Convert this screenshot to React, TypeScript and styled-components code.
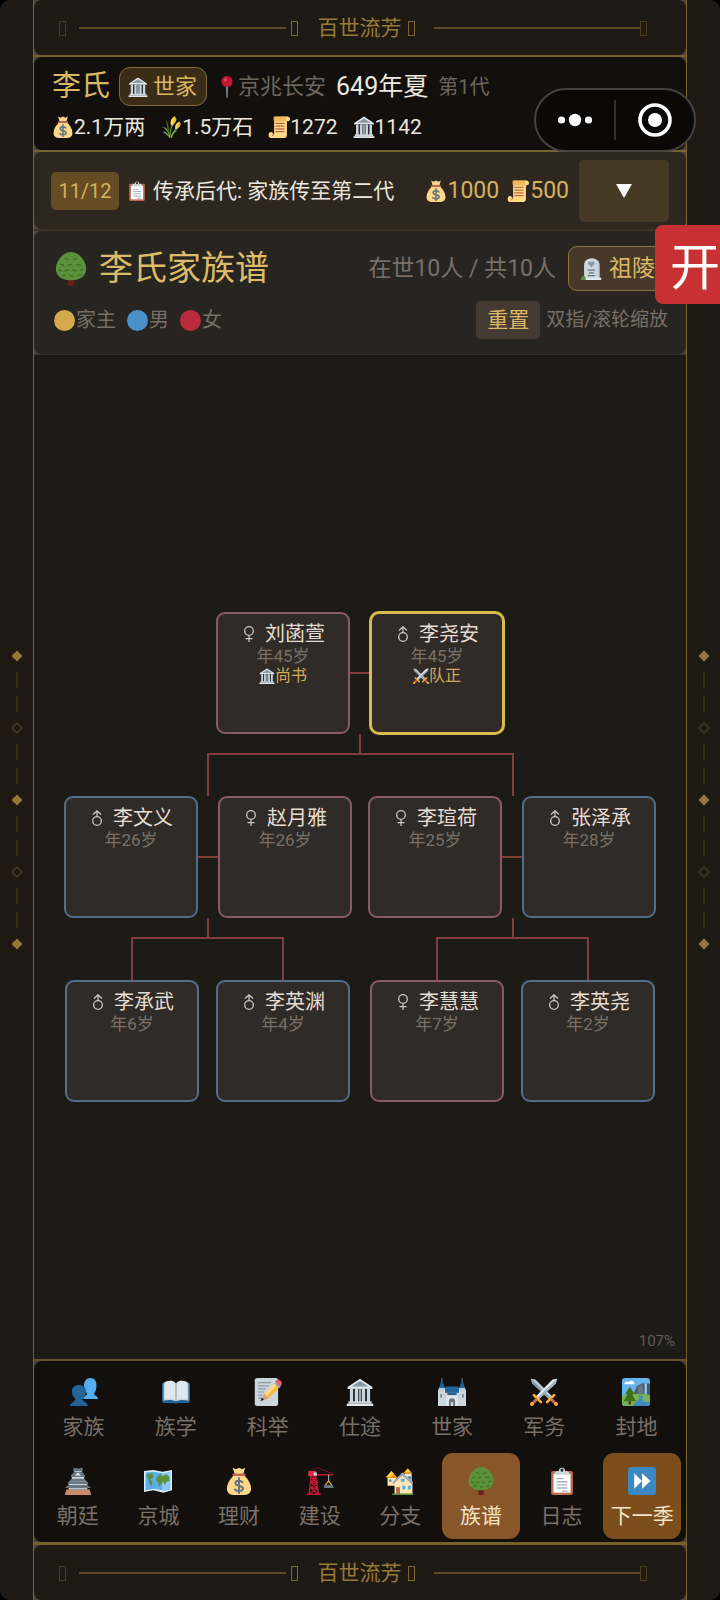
import React from "react";
import styled, { createGlobalStyle } from "styled-components";

const GlobalStyle = createGlobalStyle`
  *, *::before, *::after { box-sizing: border-box; }
  body {
    margin: 0;
    background: #000;
    color: #ece7df;
    font-family: Roboto, "Noto Sans CJK SC", sans-serif;
    font-size: 21px;
    line-height: 30px;
    overflow-x: hidden;
  }
  button { font-family: inherit; line-height: 30px; border: 0; padding: 0; cursor: pointer; }
  h1, p, ul { margin: 0; padding: 0; list-style: none; font-weight: 400; }
`;

/* ---------- icons ---------- */

type IconName =
  | "hall" | "pin" | "bag" | "wheat" | "scroll" | "clipboard" | "tree" | "tomb"
  | "people" | "book" | "memo" | "castle" | "swords" | "park" | "pagoda"
  | "map" | "crane" | "houses" | "forward";

const drawings: Record<IconName, React.ReactNode> = {
  hall: (
    <>
      <path fill="#b8c7d3" d="M3 12L18 2l15 10z" />
      <path fill="#e1e8ed" d="M2 11.500L18 1l16 10.500V14H2z" />
      <path fill="#8899a6" d="M7 11L18 4l11 7z" />
      <path fill="#292f33" d="M5 14h26v17H5z" />
      <path fill="#ccd6dd" d="M5 14h4v17H5zM11.500 14h4v17h-4zM20.500 14h4v17h-4zM27 14h4v17h-4z" />
      <path fill="#9aaab4" d="M16.500 14h3v17h-3z" />
      <path fill="#ccd6dd" d="M3 30h30v3H3z" />
      <path fill="#e1e8ed" d="M1 33h34v3H1z" />
    </>
  ),
  pin: (
    <>
      <path fill="#8899a6" d="M16.500 15h3l-.5 20-1 1-1-1z" />
      <circle cx="18" cy="9" r="9" fill="#be1931" />
      <circle cx="15.500" cy="6" r="2.500" fill="#dd4a5c" />
    </>
  ),
  bag: (
    <>
      <path fill="#fdd888" d="M12 10C7 15 2.500 21 2.500 28c0 5 3.500 8 8 8h15c4.500 0 8-3 8-8 0-7-4.500-13-9.500-18z" />
      <path fill="#fdd888" d="M10 1l4 2 4-2 4 2 4-2-2.500 8h-11z" />
      <path fill="#bf6952" d="M11 8.500h14a1.500 1.500 0 010 3H11a1.500 1.500 0 010-3z" />
      <path fill="none" stroke="#67757f" strokeWidth="2.600" strokeLinecap="round" d="M22.500 19.500c-1.200-1.200-2.700-1.700-4.500-1.700-2.800 0-4.600 1.200-4.600 3.100 0 4.700 9.700 2.200 9.700 6.700 0 2-2.200 3.300-5.100 3.300-2.100 0-4-.7-5.200-2M18 14.500v19" />
    </>
  ),
  wheat: (
    <>
      <path fill="none" stroke="#5c913b" strokeWidth="2.200" strokeLinecap="round" d="M16 35c0-10 2-17 6-23M19 35c1-7 5-12 10-16" />
      <path fill="#77b255" d="M15 35c-1-9-5-14-12-17 7 0 12 5 14 17zM14 34c-3-4-6-7-10-8 5-1 9 2 11 8zM18 35c1-7 4-11 11-11-5 2-8 5-10 11z" />
      <path fill="#3e721d" d="M13 28C12 18 11 11 9 6c5 6 6 13 6 22z" />
      <path fill="#f4d35e" d="M18 15c-2-6 0-11 6-15 2 5 1 11-4 16zM25 21c-1-6 2-10 7-12 1 6-1 10-6 13z" />
      <path fill="#e6b422" d="M22 12c1-3 2-7 2-12l3 5c0 4-2 6-5 9zM28 19c2-3 3-6 4-10l2 4c-1 4-3 6-6 8z" />
    </>
  ),
  scroll: (
    <>
      <path fill="#ffd983" d="M10 1h22c2 0 4 1.500 4 4s-1.500 3.500-3.500 3.500H31V31c0 3-2 5-4 5H5l5-6z" />
      <path fill="#e39f3d" d="M8 5c0-2 1-4 3-4h20c-2 1-2.500 3-1 4.500 1 1 .5 3-1 3H11C9 8.500 8 7 8 5z" opacity=".55" />
      <path fill="#ffd983" d="M1 31c0-3 2-5 4-5s4 2 4 3.500S8 32 7 32h18c0 2 1 4 3 4H5c-2.500 0-4-2-4-5z" />
      <path fill="none" stroke="#c1694f" strokeWidth="2" d="M12 12h15M12 16.500h15M12 21h15M12 25.500h15" />
      <path fill="none" stroke="#c1694f" strokeWidth="1.500" d="M7 32c2 0 2.500-3 .5-4" />
    </>
  ),
  clipboard: (
    <>
      <rect x="4" y="5" width="28" height="31" rx="2.500" fill="#c1694f" />
      <path fill="#fff" d="M7 9h22v24H7z" />
      <path fill="none" stroke="#a3b3c0" strokeWidth="1.800" d="M11 15h9M11 19h14M11 23h14M11 27h14M18 31h7" />
      <path fill="#ccd6dd" d="M8 10c0-4 3-5 6-5a4 4 0 018 0c3 0 6 1 6 5z" />
      <circle cx="18" cy="4" r="2" fill="#292f33" />
    </>
  ),
  tree: (
    <>
      <path fill="#662113" d="M14.500 28h7v6.500c0 2-7 2-7 0z" />
      <path fill="#5c913b" d="M18 0c8 0 16 9 16 18 0 7-6 12-16 12S2 25 2 18C2 9 10 0 18 0z" />
      <path fill="none" stroke="#3e721d" strokeWidth="1.600" strokeLinecap="round" d="M12 7l3 1M21 8l3-1M7 13l3 1M15 14l3-1M24 13l4 1M5 19l3 1M12 20l3-1M20 19l3 1M28 19l3-1M9 25l3-1M17 25l3 1M25 25l3-1" />
    </>
  ),
  tomb: (
    <>
      <path fill="#9aaab4" d="M8 34V13C8 5 13 1 19 1s12 4 12 12v21z" />
      <path fill="#ccd6dd" d="M5 34V13C5 5 10 1 17 1s12 4 12 12v21z" />
      <path fill="#8899a6" d="M17 15l-5-5c-2-3 2-6 5-3 3-3 7 0 5 3z" />
      <path fill="none" stroke="#66757f" strokeWidth="2" d="M11 20h12M13 24.500h8M11 29h12" />
      <path fill="#e1e8ed" d="M3 32h30v4H3z" />
      <path fill="#5c913b" d="M0 36c0-5 2-7 4-7s4 3 4 7z" />
    </>
  ),
  people: (
    <>
      <path fill="#55acee" d="M17 27c0-4 5-4 5-7-3-3-4-6-4-10 0-6 3-10 8.500-10S34 4 34 10c0 4-1 7-3 10 0 3 5 3 5 7z" />
      <path fill="#226699" d="M0 36c0-5 7-5 7-9-3-3-4.500-6-4.500-10 0-5 4-8 9-8s9 3 9 8c0 4-1.500 7-4.500 10 0 4 7 4 7 9z" />
    </>
  ),
  book: (
    <>
      <path fill="#226699" d="M0 7h36v23c0 1-1 2-2 2H21l-3 1-3-1H2c-1 0-2-1-2-2z" />
      <path fill="#ccd6dd" d="M2 6c6-2 12-2 16 1v23c-5-2-10-2-16-1zM34 6c-6-2-12-2-16 1v23c5-2 10-2 16-1z" />
      <path fill="#e1e8ed" d="M4 5c5-2 10-2 13 1v22c-4-2-8-2-13-1zM32 5c-5-2-10-2-13 1v22c4-2 8-2 13-1z" />
      <path fill="#99aab5" d="M17.300 7h1.400v23h-1.400z" />
    </>
  ),
  memo: (
    <>
      <rect x="1" y="0" width="30" height="36" rx="3" fill="#ccd6dd" />
      <path fill="none" stroke="#8899a6" strokeWidth="1.600" d="M5 6h17M5 10h14M5 14h10M5 18h8M5 22h6M5 26h5" />
      <path fill="#f4ba41" d="M13 20L28 5l6 6-15 15-8 3z" />
      <path fill="#ffd983" d="M13 20L28 5l3 3-15 15z" />
      <path fill="#99aab5" d="M26 7l3-3 6 6-3 3z" />
      <path fill="#ea596e" d="M28.500 3.500c2-4 9 1 7 5l-2 2-6-6z" />
      <path fill="#d99e82" d="M13 20l5 6-9 4z" />
      <path fill="#292f33" d="M10 25l3 3-5 2z" />
    </>
  ),
  castle: (
    <>
      <path fill="#226699" d="M5 3l4 10H1zM31 3l4 10h-8zM8 15l2-4h16l2 4v4H8z" />
      <path fill="#8899a6" d="M4.500 0h1v5h-1zM30.500 0h1v5h-1z" />
      <path fill="#b8c7d3" d="M1 13h8v23H1zM27 13h8v23h-8z" />
      <path fill="#ccd6dd" d="M0 15h3v2h3v-2h3v4h18v-4h3v2h3v-2h3v21H0z" />
      <path fill="#e1e8ed" d="M11 20h14v16H11z" />
      <path fill="#226699" d="M12 19h12v3H12z" />
      <path fill="#66757f" d="M14 36v-6a4 4 0 018 0v6zM3 21h2v4H3zM31 21h2v4h-2z" />
      <path fill="#ccd6dd" d="M16.500 36v-5h3v5z" />
    </>
  ),
  swords: (
    <>
      <path fill="#bdcbd6" d="M1 1l6 1 22 22-4 4L3 7z" />
      <path fill="#8899a6" d="M1 1l26 25-2 2L3 7z" />
      <path fill="#e1e8ed" d="M35 1l-6 1L7 24l4 4L33 7z" />
      <path fill="#9dafbb" d="M35 1L9 26l2 2L33 7z" />
      <path fill="none" stroke="#ffac33" strokeWidth="3.400" strokeLinecap="round" d="M5 22l9 9M31 22l-9 9" />
      <path fill="none" stroke="#bf6952" strokeWidth="4" d="M9 27l-6 6M27 27l6 6" />
      <circle cx="2.500" cy="33.500" r="2.500" fill="#ffac33" />
      <circle cx="33.500" cy="33.500" r="2.500" fill="#ffac33" />
    </>
  ),
  park: (
    <>
      <rect width="36" height="36" rx="4" fill="#66b5ee" />
      <path fill="#fff" d="M3 8a4 4 0 016-3 4 4 0 017 3H3z" />
      <path fill="#4b5760" d="M15 20l4-9 6-4h11v17H15z" />
      <path fill="#66757f" d="M20 12l6-5 2 13h-8z" />
      <path fill="#88c9f9" d="M29 7h3v15h-3z" />
      <path fill="#77b255" d="M0 23c8-3 25-4 36-1v10c0 2-2 4-4 4H4c-2 0-4-2-4-4z" />
      <path fill="#4289c1" d="M21 22c11 2 2 5 7 8 3 2 8 1 8 1v2c-1 2-2 3-4 3H14c1-5 11-6 7-14z" />
      <path fill="#3e721d" d="M10 11l6 10h-3l5 9H2l5-9H4z" />
      <path fill="#662113" d="M8.500 30h3v4h-3z" />
    </>
  ),
  pagoda: (
    <>
      <path fill="#c98a6e" d="M3 29h30l2 7H1z" />
      <path fill="#ccd6dd" d="M13 3h10v5H13zM10 12h16v5H10zM6 21h24v8H6z" />
      <path fill="#66757f" d="M12 1l6 1 6-1v4H12zM9 11l4-5h10l4 5v2H9zM5 20l5-5h16l5 5v2H5zM2 26l4-3h24l4 3v1H2z" />
      <path fill="#e1e8ed" d="M14 11l4-4 4 4z" />
      <path fill="#8899a6" d="M8 28h20v1H8zM8 18h20v1H8z" />
    </>
  ),
  map: (
    <>
      <path fill="#d8ecfa" d="M0 5l12-1 12 2 12-2v26l-11 3-13-3-12 2z" />
      <path fill="#5dadec" d="M2 7l10-1v22L2 30zM12 6l12 2v22l-12-2z" />
      <path fill="#88c9f9" d="M24 8l10-2v23l-10 2z" />
      <path fill="#5c913b" d="M4 9l7-1 1 5-4 3 3 4-1 5-3-4-2-7-2-2zM17 12l5-3 2 3 4-3 4 3 1 6-4 1-2 4-3-5-2 5-3 2-1-6-3-2z" />
    </>
  ),
  crane: (
    <>
      <path fill="none" stroke="#be1931" strokeWidth="1.800" d="M7 8L4 35M12 8l4 27M7 14h6M6 20h8M5 27h10M7 14l7 6-8 7 10 8M12 14l-6 6 9 7-11 8M3 10h32" />
      <path fill="none" stroke="#7d1524" strokeWidth="1.200" d="M8 4l7-3 20 8" />
      <path fill="#dd2e44" d="M3 5h10v7H3z" />
      <path fill="#ccd6dd" d="M10 7h4v4h-4z" />
      <path fill="#be1931" d="M1 34h18v2H1z" />
      <path fill="#99aab5" d="M28.300 10h1.500v8h-1.500z" />
      <path fill="none" stroke="#ffac33" strokeWidth="1.500" d="M25 23l4-5 4 5" />
      <path fill="#66757f" d="M23 23h12v4H23z" />
    </>
  ),
  houses: (
    <>
      <path fill="#ffe8b6" d="M2 14h11v10H2zM24 8h9v10h-9z" />
      <path fill="#f4900c" d="M0 14l7-9 8 9zM22 8l6-6 6 6z" />
      <path fill="#ffcc4d" d="M0 13l7-8 3 4-4 4zM24 7l4-5 3 4z" />
      <path fill="#3b88c3" d="M4 16h3v3H4zM28 12h4v4h-4z" />
      <path fill="#ffe8b6" d="M11 19l11-11 12 11v16H11z" />
      <path fill="#99aab5" d="M8 20L21 7l14 13-2 2L21 11 10 22z" />
      <path fill="#c1694f" d="M13 26h5v9h-5z" />
      <path fill="#5dadec" d="M21 24h4v5h-4zM28 24h4v5h-4zM19 15h5v4h-5z" />
      <path fill="#5c913b" d="M8 34h27v2H8z" />
    </>
  ),
  forward: (
    <>
      <rect width="36" height="36" rx="4" fill="#3b88c3" />
      <path fill="#fff" d="M8 8l10 10L8 28zM18 8l11 10-11 10z" />
    </>
  ),
};

const Glyph = styled.svg<{ $size: number }>`
  display: block;
  flex: none;
  width: ${(p) => p.$size}px;
  height: ${(p) => p.$size}px;
`;

function Icon({ name, size }: { name: IconName; size: number }) {
  return (
    <Glyph $size={size} viewBox="0 0 36 36" aria-hidden="true">
      {drawings[name]}
    </Glyph>
  );
}

/* ---------- frame ---------- */

const Shell = styled.div`
  display: flex;
  min-height: 100vh;
`;

const Rail = styled.aside<{ $side: "left" | "right" }>`
  flex: none;
  width: 34px;
  display: flex;
  flex-direction: column;
  align-items: center;
  justify-content: center;
  background: ${(p) => (p.$side === "left" ? "#201812" : "#1f1913")};
  border: 0 solid #7a6431;
  border-left-width: ${(p) => (p.$side === "right" ? 1 : 0)}px;
  border-right-width: ${(p) => (p.$side === "left" ? 1 : 0)}px;
  border-radius: ${(p) => (p.$side === "left" ? "10px 0 0 10px" : "0 10px 10px 0")};
`;

const Mark = styled.svg`
  display: block;
  width: 16px;
  height: 24px;
`;

const Center = styled.div`
  flex: 1;
  min-width: 0;
  display: flex;
  flex-direction: column;
  background: #1d1b16;
`;

const Band = styled.div<{ $line?: string; $width?: number }>`
  background: #4a443b;
  border-bottom: ${(p) => p.$width ?? 0}px solid ${(p) => p.$line ?? "transparent"};
`;

const OrnamentPanel = styled.div`
  height: 55px;
  display: flex;
  align-items: center;
  padding: 0 39px 0 25px;
  border-radius: 8px;
  background: #1f1913;
  color: #967b36;
`;

const Tofu = styled.span<{ $dim?: boolean }>`
  flex: none;
  width: 7px;
  height: 15px;
  margin-top: 2px;
  border: 1px solid ${(p) => (p.$dim ? "#4b3c1f" : "#7d672e")};
`;

const Rule = styled.span<{ $before: number; $after: number }>`
  flex: 1;
  height: 2px;
  margin: 0 ${(p) => p.$after}px 0 ${(p) => p.$before}px;
  background: #5b4922;
`;

const Motto = styled.span`
  margin: 0 6px 0 20px;
`;

function Ornament() {
  return (
    <OrnamentPanel>
      <Tofu $dim />
      <Rule $before={13} $after={5} />
      <Tofu />
      <Motto>百世流芳</Motto>
      <Tofu />
      <Rule $before={19} $after={0} />
      <Tofu $dim />
    </OrnamentPanel>
  );
}

const railMarks = ["full", "bar", "bar", "open", "bar", "bar", "full", "bar", "bar", "open", "bar", "bar", "full"];

function SideRail({ side }: { side: "left" | "right" }) {
  return (
    <Rail $side={side} aria-hidden="true">
      {railMarks.map((m, i) => (
        <Mark key={i} viewBox="0 0 16 24">
          {m === "full" && <path d="M8 6.500l5.500 5.500L8 17.500 2.500 12z" fill="#93783a" />}
          {m === "open" && <path d="M8 7l5 5-5 5-5-5z" fill="none" stroke="#4a3a22" strokeWidth="1.400" />}
          {m === "bar" && <path d="M8 4v16" stroke="#42341e" strokeWidth="1.400" />}
        </Mark>
      ))}
    </Rail>
  );
}

/* ---------- status ---------- */

const StatusPanel = styled.header`
  display: flex;
  flex-direction: column;
  gap: 4px;
  padding: 10px 18px 6px;
  border-radius: 8px;
  background: #130f0d;
`;

const IdentityRow = styled.div`
  display: flex;
  align-items: center;
  height: 39px;
  white-space: nowrap;
`;

const Clan = styled.span`
  font-size: 29px;
  line-height: 39px;
  color: #d9b765;
`;

const Rank = styled.span`
  display: flex;
  align-items: center;
  gap: 5px;
  height: 39px;
  margin: 0 9px;
  padding: 0 9px 0 8px;
  border: 1px solid #816939;
  border-radius: 11px;
  background: #3b2c17;
  color: #d9b765;
  font-size: 22px;
`;

const Place = styled.span`
  display: flex;
  align-items: center;
  font-size: 22px;
  color: #6e655d;
`;

const Season = styled.span`
  margin: 0 10px;
  font-size: 25px;
`;

const Generation = styled.span`
  font-size: 20px;
  color: #6e655d;
`;

const Resources = styled.ul`
  display: flex;
  gap: 15px;
  line-height: 34px;
`;

const Resource = styled.li`
  display: flex;
  align-items: center;
`;

/* ---------- task ---------- */

const TaskPanel = styled.section`
  display: flex;
  align-items: center;
  padding: 8px 17px 7px;
  border-radius: 8px;
  background: #2e271f;
  white-space: nowrap;
`;

const Progress = styled.span`
  width: 68px;
  margin-right: 8px;
  border-radius: 5px;
  background: #664c22;
  color: #d6b15f;
  font-size: 20px;
  line-height: 38px;
  text-align: center;
`;

const TaskText = styled.p`
  flex: 1;
  margin-left: 6px;
`;

const Rewards = styled.div`
  display: flex;
  gap: 8px;
  margin-right: 10px;
  color: #d6b15f;
  font-size: 23px;
  line-height: 34px;
`;

const Reward = styled.span`
  display: flex;
  align-items: center;
  gap: 1px;
`;

const Expand = styled.button`
  display: flex;
  align-items: center;
  justify-content: center;
  width: 90px;
  height: 62px;
  border-radius: 5px;
  background: #463926;
`;

/* ---------- title ---------- */

const TitlePanel = styled.section`
  display: flex;
  flex-direction: column;
  gap: 10px;
  padding: 15px 18px 15px 20px;
  border-radius: 8px;
  background: #282420;
`;

const TitleRow = styled.div`
  display: flex;
  align-items: center;
  height: 45px;
  white-space: nowrap;
`;

const Title = styled.h1`
  display: flex;
  align-items: center;
  gap: 11px;
  flex: 1;
  font-size: 34px;
  line-height: 45px;
  color: #dcbc69;
`;

const Count = styled.span`
  margin-right: 12px;
  font-size: 23px;
  color: #786f67;
`;

const TombButton = styled.button`
  display: flex;
  align-items: center;
  gap: 6px;
  height: 45px;
  padding: 0 12px;
  border: 1px solid #8e733a;
  border-radius: 9px;
  background: #47382a;
  color: #d9b765;
  font-size: 23px;
`;

const LegendRow = styled.div`
  display: flex;
  align-items: center;
  height: 38px;
  white-space: nowrap;
`;

const Legend = styled.ul`
  display: flex;
  flex: 1;
  gap: 11px;
  font-size: 20px;
  color: #786f67;
`;

const LegendItem = styled.li<{ $color: string }>`
  display: flex;
  align-items: center;
  gap: 1px;
  &::before {
    content: "";
    width: 21px;
    height: 21px;
    border-radius: 50%;
    background: ${(p) => p.$color};
  }
`;

const ResetButton = styled.button`
  height: 38px;
  padding: 0 11px;
  border-radius: 5px;
  background: #453a32;
  color: #d9b765;
  font-size: 21px;
`;

const Hint = styled.span`
  margin-left: 6px;
  font-size: 19px;
  color: #786f67;
`;

/* ---------- family tree ---------- */

const Canvas = styled.main`
  position: relative;
  flex: 1;
  display: flex;
  align-items: center;
  justify-content: center;
  min-height: 560px;
`;

const Tree = styled.div`
  position: relative;
  width: 592px;
  height: 490px;
`;

const Links = styled.svg`
  display: block;
  width: 592px;
  height: 490px;
`;

const borderOf = { m: "#536e8c", f: "#8a5b67", head: "#dabb4b" };

const Card = styled.article<{ $x: number; $y: number; $kind: "m" | "f" | "head" }>`
  position: absolute;
  left: ${(p) => p.$x}px;
  top: ${(p) => p.$y}px;
  width: 134px;
  height: 122px;
  padding-top: 8px;
  border-radius: 9px;
  background: #302b26;
  border: 2px solid ${(p) => borderOf[p.$kind]};
  box-shadow: 0 0 0 ${(p) => (p.$kind === "head" ? 1 : 0)}px ${(p) => borderOf[p.$kind]};
  text-align: center;
`;

const Name = styled.div`
  display: flex;
  align-items: center;
  justify-content: center;
  gap: 8px;
  font-size: 20px;
  line-height: 24px;
  color: #e6ddd2;
`;

const Age = styled.div`
  font-size: 17px;
  line-height: 20px;
  color: #7b7065;
`;

const Post = styled.div`
  display: flex;
  align-items: center;
  justify-content: center;
  font-size: 16px;
  line-height: 20px;
  color: #d0aa5f;
`;

const Zoom = styled.span`
  position: absolute;
  right: 11px;
  bottom: 7px;
  font-size: 15px;
  line-height: 22px;
  color: #615b53;
`;

function Sex({ sex }: { sex: "m" | "f" }) {
  return (
    <Glyph $size={16} viewBox="0 0 16 16" role="img" aria-label={sex === "m" ? "男" : "女"}>
      <g fill="none" stroke="#cfc6bb" strokeWidth="1.300">
        {sex === "m" ? (
          <>
            <circle cx="8" cy="11" r="4.300" />
            <path d="M8 6.700V1M4 4.500L8 .8l4 3.700" />
          </>
        ) : (
          <>
            <circle cx="8" cy="5" r="4.300" />
            <path d="M8 9.300V16M4.500 12.600h7" />
          </>
        )}
      </g>
    </Glyph>
  );
}

type Person = {
  name: string; age: number; sex: "m" | "f"; x: number; y: number;
  head?: boolean; post?: string; icon?: IconName;
};

const people: Person[] = [
  { name: "刘菡萱", age: 45, sex: "f", x: 152, y: 0, post: "尚书", icon: "hall" },
  { name: "李尧安", age: 45, sex: "m", x: 306, y: 0, head: true, post: "队正", icon: "swords" },
  { name: "李文义", age: 26, sex: "m", x: 0, y: 184 },
  { name: "赵月雅", age: 26, sex: "f", x: 154, y: 184 },
  { name: "李瑄荷", age: 25, sex: "f", x: 304, y: 184 },
  { name: "张泽承", age: 28, sex: "m", x: 458, y: 184 },
  { name: "李承武", age: 6, sex: "m", x: 1, y: 368 },
  { name: "李英渊", age: 4, sex: "m", x: 152, y: 368 },
  { name: "李慧慧", age: 7, sex: "f", x: 306, y: 368 },
  { name: "李英尧", age: 2, sex: "m", x: 457, y: 368 },
];

const links =
  "M286 61h20M134 245h20M438 245h20" +
  "M296 122v20M144 184v-42h305v42" +
  "M144 306v20M68 368v-42h151v42" +
  "M449 306v20M373 368v-42h151v42";

/* ---------- navigation ---------- */

const NavPanel = styled.nav`
  display: flex;
  flex-direction: column;
  gap: 3px;
  padding: 3px 5px;
  border-radius: 8px;
  background: #130f0c;
`;

const NavTop = styled.div`
  border-top: 2px solid #66532c;
`;

const NavRow = styled.div`
  display: flex;
  gap: 3px;
`;

const NavButton = styled.button<{ $tone?: "active" | "next" }>`
  flex: 1 1 0;
  min-width: 0;
  display: flex;
  flex-direction: column;
  align-items: center;
  gap: 6px;
  padding: 14px 0 8px;
  border-radius: 11px;
  background: ${(p) => (p.$tone === "active" ? "#885729" : p.$tone === "next" ? "#7b4e1b" : "transparent")};
  color: ${(p) => (p.$tone ? "#f6e3c6" : "#7a7067")};
  font-size: 21px;
  white-space: nowrap;
`;

type NavItem = { label: string; icon: IconName; tone?: "active" | "next" };

const navRows: NavItem[][] = [
  [
    { label: "家族", icon: "people" },
    { label: "族学", icon: "book" },
    { label: "科举", icon: "memo" },
    { label: "仕途", icon: "hall" },
    { label: "世家", icon: "castle" },
    { label: "军务", icon: "swords" },
    { label: "封地", icon: "park" },
  ],
  [
    { label: "朝廷", icon: "pagoda" },
    { label: "京城", icon: "map" },
    { label: "理财", icon: "bag" },
    { label: "建设", icon: "crane" },
    { label: "分支", icon: "houses" },
    { label: "族谱", icon: "tree", tone: "active" },
    { label: "日志", icon: "clipboard" },
    { label: "下一季", icon: "forward", tone: "next" },
  ],
];

/* ---------- floating controls ---------- */

const Capsule = styled.div`
  position: absolute;
  top: 88px;
  right: 24px;
  display: flex;
  align-items: center;
  width: 162px;
  height: 64px;
  border: 2px solid #45423f;
  border-radius: 32px;
  background: #0b0908;
`;

const CapsuleButton = styled.button`
  flex: 1;
  display: flex;
  justify-content: center;
  background: none;
  & + & { border-left: 2px solid #33302e; }
`;

const Ribbon = styled.button`
  position: absolute;
  top: 225px;
  right: 0;
  width: 65px;
  height: 79px;
  padding: 6px 0 0 15px;
  border-radius: 8px 0 0 8px;
  background: #c73133;
  color: #fff;
  font-size: 50px;
  line-height: 72px;
  text-align: left;
`;

export default function App() {
  return (
    <>
      <GlobalStyle />
      <Shell>
        <SideRail side="left" />
        <Center>
          <Band $line="#766029" $width={2}>
            <Ornament />
          </Band>

          <Band $line="#796333" $width={2}>
            <StatusPanel>
              <IdentityRow>
                <Clan>李氏</Clan>
                <Rank><Icon name="hall" size={20} />世家</Rank>
                <Place><Icon name="pin" size={22} />京兆长安</Place>
                <Season>649年夏</Season>
                <Generation>第1代</Generation>
              </IdentityRow>
              <Resources>
                <Resource><Icon name="bag" size={22} />2.1万两</Resource>
                <Resource><Icon name="wheat" size={22} />1.5万石</Resource>
                <Resource><Icon name="scroll" size={22} />1272</Resource>
                <Resource><Icon name="hall" size={22} />1142</Resource>
              </Resources>
            </StatusPanel>
          </Band>

          <Band $line="#3d3425" $width={2}>
            <TaskPanel>
              <Progress>11/12</Progress>
              <Icon name="clipboard" size={20} />
              <TaskText>传承后代: 家族传至第二代</TaskText>
              <Rewards>
                <Reward><Icon name="bag" size={22} />1000</Reward>
                <Reward><Icon name="scroll" size={22} />500</Reward>
              </Rewards>
              <Expand aria-label="展开">
                <svg width="18" height="16" viewBox="0 0 18 16" aria-hidden="true">
                  <path d="M1 1h16L9 15z" fill="#fff" />
                </svg>
              </Expand>
            </TaskPanel>
          </Band>

          <Band $line="#35302a" $width={1}>
            <TitlePanel>
              <TitleRow>
                <Title><Icon name="tree" size={34} />李氏家族谱</Title>
                <Count>在世10人 / 共10人</Count>
                <TombButton><Icon name="tomb" size={22} />祖陵</TombButton>
              </TitleRow>
              <LegendRow>
                <Legend>
                  <LegendItem $color="#d2a94b">家主</LegendItem>
                  <LegendItem $color="#4a90c8">男</LegendItem>
                  <LegendItem $color="#b92b3d">女</LegendItem>
                </Legend>
                <ResetButton>重置</ResetButton>
                <Hint>双指/滚轮缩放</Hint>
              </LegendRow>
            </TitlePanel>
          </Band>

          <Canvas>
            <Tree>
              <Links viewBox="0 0 592 490" aria-hidden="true">
                <path d={links} fill="none" stroke="#853c3f" strokeWidth="2" />
              </Links>
              {people.map((p) => (
                <Card key={p.name} $x={p.x} $y={p.y} $kind={p.head ? "head" : p.sex}>
                  <Name><Sex sex={p.sex} />{p.name}</Name>
                  <Age>{`年${p.age}岁`}</Age>
                  {p.post && p.icon && <Post><Icon name={p.icon} size={16} />{p.post}</Post>}
                </Card>
              ))}
            </Tree>
            <Zoom>107%</Zoom>
          </Canvas>

          <Band $line="#786029" $width={3}>
            <NavTop>
              <NavPanel>
                {navRows.map((row, i) => (
                  <NavRow key={i}>
                    {row.map((n) => (
                      <NavButton key={n.label} $tone={n.tone}>
                        <Icon name={n.icon} size={28} />
                        {n.label}
                      </NavButton>
                    ))}
                  </NavRow>
                ))}
              </NavPanel>
            </NavTop>
          </Band>

          <Band>
            <Ornament />
          </Band>
        </Center>
        <SideRail side="right" />
      </Shell>

      <Capsule>
        <CapsuleButton aria-label="更多">
          <svg width="36" height="40" viewBox="0 0 36 40" aria-hidden="true">
            <g fill="#fff">
              <circle cx="4.500" cy="20" r="3.600" />
              <circle cx="18" cy="20" r="6.200" />
              <circle cx="31.500" cy="20" r="3.600" />
            </g>
          </svg>
        </CapsuleButton>
        <CapsuleButton aria-label="关闭">
          <svg width="36" height="40" viewBox="0 0 36 40" aria-hidden="true">
            <circle cx="18" cy="20" r="15" fill="none" stroke="#fff" strokeWidth="3.600" />
            <circle cx="18" cy="20" r="7" fill="#fff" />
          </svg>
        </CapsuleButton>
      </Capsule>
      <Ribbon>开</Ribbon>
    </>
  );
}
